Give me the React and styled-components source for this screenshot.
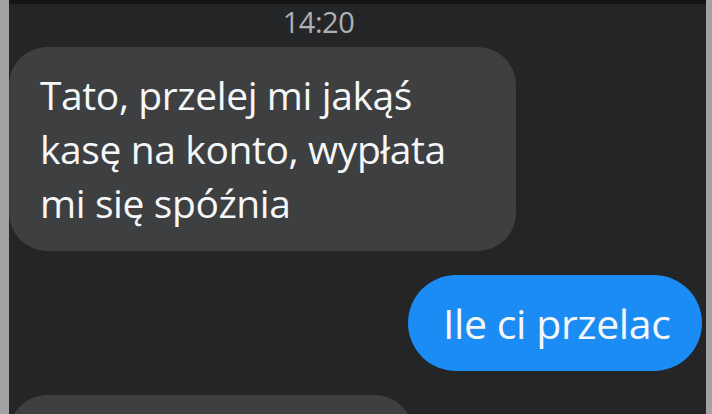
import React from "react";
import styled, { createGlobalStyle } from "styled-components";

const Global = createGlobalStyle`
  html, body { margin: 0; padding: 0; background: #242526; overflow: hidden; }
  #root { width: 712px; height: 414px; }
`;

const Frame = styled.div`
  display: flex;
  width: 712px;
  height: 414px;
  overflow: hidden;
`;

const SideStrip = styled.div`
  flex: 0 0 ${(p) => p.$w}px;
  background: #a2a2a2;
`;

const Chat = styled.div`
  flex: 1;
  display: flex;
  flex-direction: column;
  background: #242526;
  border-top: 4px solid #141516;
  overflow: hidden;
  font-family: "Open Sans", "Noto Sans", sans-serif;
`;

const Time = styled.div`
  flex-shrink: 0;
  height: 43px;
  padding-right: 78px;
  text-align: center;
  color: #aeb1b6;
  font-size: 29px;
  line-height: 36px;
  letter-spacing: -0.5px;
`;

const Row = styled.div`
  display: flex;
  justify-content: ${(p) => (p.$out ? "flex-end" : "flex-start")};
  padding-right: ${(p) => (p.$out ? 4 : 0)}px;
  margin-top: ${(p) => p.$mt || 0}px;
  flex-shrink: 0;
`;

const Bubble = styled.div`
  box-sizing: border-box;
  width: ${(p) => p.$w}px;
  min-height: ${(p) => p.$h}px;
  padding: ${(p) => p.$pad};
  border-radius: ${(p) => p.$r}px;
  background: ${(p) => (p.$out ? "#1c8cf5" : "#3e3f41")};
  color: #f5f7f9;
  font-size: ${(p) => p.$fs}px;
  line-height: ${(p) => p.$lh}px;
  letter-spacing: -0.4px;
  white-space: pre-line;
`;

export default function App() {
  return (
    <>
      <Global />
      <Frame>
        <SideStrip $w={9} />
        <Chat>
          <Time>14:20</Time>
          <Row>
            <Bubble $w={507} $h={204} $r={38} $fs={39} $lh={54} $pad="21px 20px 20px 31px">
              {"Tato, przelej mi jakąś\nkasę na konto, wypłata\nmi się spóźnia"}
            </Bubble>
          </Row>
          <Row $out $mt={24}>
            <Bubble $out $w={294} $h={96} $r={48} $fs={41} $lh={96} $pad="0 0 0 35px">
              Ile ci przelac
            </Bubble>
          </Row>
          <Row $mt={24}>
            <Bubble $w={404} $h={120} $r={38} $fs={39} $lh={54} $pad="0" />
          </Row>
        </Chat>
        <SideStrip $w={6} />
      </Frame>
    </>
  );
}
